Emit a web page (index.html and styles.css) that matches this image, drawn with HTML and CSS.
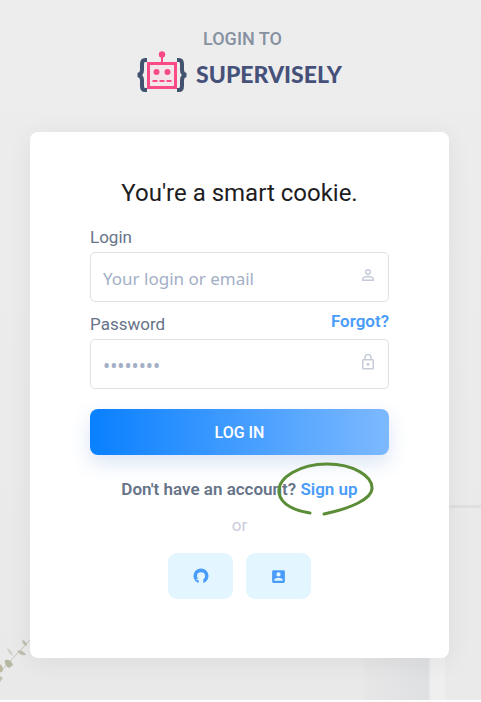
FILE: index.html
```html
<!DOCTYPE html>
<html lang="en">
<head>
<meta charset="utf-8">
<meta name="viewport" content="width=device-width, initial-scale=1">
<title>Login to Supervisely</title>
<link rel="stylesheet" href="styles.css">
</head>
<body>
<div class="page">
  <div class="wall" aria-hidden="true">
    <div class="shelf"></div>
    <div class="post"></div>
    <svg class="twig" width="36" height="50" viewBox="0 0 36 50">
      <path d="M-2 40L30 6" fill="none" stroke="#c3c3ba" stroke-width="1"/>
      <g fill="#c0bfb0">
        <path d="M22 6q5 1 5 6q-5-1-5-6z"/>
        <path d="M17 17q6-2 9 4q-6 1-9-4z"/>
        <path d="M7 14q5 2 6 8q-5-2-6-8z" fill="#d0d0c9"/>
        <path d="M5 26q6-1 8 5l-4 3q-5-3-4-8z" fill="#b8b7a2"/>
        <path d="M-2 29q5 2 5 8l-5 3z" fill="#bdb99f"/>
        <path d="M0 42l3 2-3 4z"/>
      </g>
    </svg>
  </div>

  <header class="brand">
    <p class="brand-lead">LOGIN TO</p>
    <div class="brand-logo">
      <svg width="50" height="42" viewBox="0 0 50 42" aria-hidden="true">
        <g fill="none" stroke="#43536f" stroke-width="4">
          <path d="M10 9H8q-3 0-3 4v6q0 4-4 5q4 1 4 5v6q0 4 3 4h2"/>
          <path d="M40 9h2q3 0 3 4v6q0 4 4 5q-4 1-4 5v6q0 4-3 4h-2"/>
        </g>
        <rect x="11.500" y="12.500" width="27" height="24" fill="#f1e6ea" stroke="#fa4b86" stroke-width="3"/>
        <path d="M25 4v9" stroke="#fa4b86" stroke-width="2"/>
        <g fill="#fa4b86">
          <circle cx="25" cy="3.500" r="3.200"/>
          <circle cx="19.500" cy="21" r="3"/>
          <circle cx="30.500" cy="21" r="3"/>
        </g>
        <path d="M15.500 30h5m2 0h5m2 0h5" stroke="#fa4b86" stroke-width="2"/>
      </svg>
      <span class="brand-name">SUPERVISELY</span>
    </div>
  </header>

  <main class="card">
    <h1>You're a smart cookie.</h1>
    <form>
      <div class="label-row"><label for="login">Login</label></div>
      <div class="field">
        <input id="login" type="text" placeholder="Your login or email">
        <svg viewBox="0 0 24 24" aria-hidden="true"><path d="M12 5.900a2.100 2.100 0 1 1 0 4.200 2.100 2.100 0 0 1 0-4.200m0 9c2.970 0 6.100 1.460 6.100 2.100v1.100H5.900V17c0-.64 3.130-2.100 6.100-2.100M12 4a4 4 0 1 0 0 8 4 4 0 0 0 0-8zm0 9c-2.670 0-8 1.340-8 4v3h16v-3c0-2.660-5.330-4-8-4z"/></svg>
      </div>
      <div class="label-row"><label for="password">Password</label><a href="#">Forgot?</a></div>
      <div class="field">
        <input id="password" type="password" placeholder="••••••••">
        <svg viewBox="0 0 24 24" aria-hidden="true"><path d="M12 17a2 2 0 1 0 0-4 2 2 0 0 0 0 4zm6-9h-1V6A5 5 0 0 0 7 6v2H6a2 2 0 0 0-2 2v10c0 1.100.9 2 2 2h12a2 2 0 0 0 2-2V10a2 2 0 0 0-2-2zM8.900 6a3.100 3.100 0 0 1 6.200 0v2H8.900V6zM18 20H6V10h12v10z"/></svg>
      </div>
      <button class="submit" type="submit">LOG IN</button>
    </form>
    <p class="signup">Don't have an account? <a href="#">Sign up<svg class="ring" width="98" height="54" viewBox="0 0 98 54" aria-hidden="true"><path d="M33 51C19 49 4 43 2 31C0 15 24 2 50 2C76 2 96 14 95 27C94 37 75 46 47 52" fill="none" stroke="#5a8d36" stroke-width="3" stroke-linecap="round"/></svg></a></p>
    <p class="or">or</p>
    <div class="social">
      <button type="button" aria-label="Log in with GitHub"><svg width="16" height="16" viewBox="0 0 24 24"><path d="M8.500 22.500v-4c-2.500.3-3.500-1-4-2.200l2 .3 2 .2c-1.700-1-2.500-2.700-2.500-4.800 0-4 2.500-5.500 6-5.500s6 1.500 6 5.500c0 2.800-1.300 4.500-3 5.200l.5 1.300v4A11.200 11.200 0 1 0 8.500 22.500z"/></svg></button>
      <button type="button" aria-label="Log in with account"><svg width="17" height="17" viewBox="0 0 24 24"><path d="M3 5v14a2 2 0 0 0 2 2h14a2 2 0 0 0 2-2V5a2 2 0 0 0-2-2H5a2 2 0 0 0-2 2zm12 4a3 3 0 1 1-6 0 3 3 0 0 1 6 0zm-9 8c0-2 4-3.100 6-3.100s6 1.100 6 3.100v1H6v-1z"/></svg></button>
    </div>
  </main>
</div>
</body>
</html>
```
FILE: styles.css
```css
* { box-sizing: border-box; }

body {
  margin: 0;
  font-family: Roboto, "Liberation Sans", sans-serif;
  font-size: 17px;
  line-height: 20px;
  color: #667388;
}

h1, p { margin: 0; }
a { color: #4a9cfb; text-decoration: none; font-weight: 600; }

.page {
  position: relative;
  min-height: 100vh;
  padding: 29px 32px 42px 30px;
  border-bottom: 2px solid #fcfcfc;
  background: linear-gradient(#ededee, #ebebec 60%, #e9e9ea);
}

.wall { position: absolute; inset: 0; overflow: hidden; }
.shelf {
  position: absolute;
  right: 0;
  bottom: 0;
  width: 36px;
  height: 195px;
  border-top: 3px solid #e0e0e1;
  background: #eaeaeb;
}
.post {
  position: absolute;
  right: 36px;
  bottom: 0;
  width: 81px;
  height: 46px;
  background: linear-gradient(90deg, #e7e7e8, #dfe0e2 64px, #efeff0 67px);
}
.twig { position: absolute; left: 0; bottom: 16px; }

.brand {
  position: relative;
  display: flex;
  flex-direction: column;
  align-items: center;
}
.brand-lead { padding-left: 6px; font-size: 18px; font-weight: 500; color: #85919f; }
.brand-logo { display: flex; align-items: center; gap: 9px; margin-top: 2px; }
.brand-name {
  padding-top: 4px;
  font-family: Lato, sans-serif;
  font-size: 23px;
  font-weight: 900;
  line-height: 26px;
  color: #46517a;
}

.card {
  position: relative;
  margin-top: 39px;
  padding: 45px 60px 59px;
  border-radius: 8px;
  background: #fff;
  box-shadow: 0 4px 24px rgba(60, 60, 70, 0.08);
}
h1 {
  font-size: 24px;
  font-weight: 400;
  line-height: 32px;
  text-align: center;
  color: #1d1d1f;
}

form { margin-top: 15px; }
.label-row {
  display: flex;
  justify-content: space-between;
  height: 28px;
}
.label-row label { padding-top: 3px; }

.field { position: relative; margin-bottom: 9px; }
.field input {
  display: block;
  width: 100%;
  height: 50px;
  padding: 2px 40px 0 12px;
  border: 1px solid #dfe1e6;
  border-radius: 5px;
  background: #fff;
  font: 17px "Noto Sans", sans-serif;
  color: #5f6b80;
}
.field input[type="password"] { padding-top: 4px; font-size: 19px; }
.field input::placeholder { color: #a3afc6; opacity: 1; }
.field svg {
  position: absolute;
  top: 14px;
  right: 12px;
  width: 18px;
  height: 18px;
  fill: #c6cbd8;
}

.submit {
  display: block;
  width: 100%;
  height: 46px;
  margin-top: 20px;
  border: 0;
  border-radius: 8px;
  background: linear-gradient(90deg, #0980ff, #7db9ff);
  box-shadow: 0 8px 20px rgba(50, 110, 200, 0.18);
  font: 500 16px Roboto, sans-serif;
  color: #fff;
}

.signup { margin-top: 24px; font-weight: 600; text-align: center; white-space: nowrap; }
.signup a { position: relative; }
.ring { position: absolute; left: -23px; top: -17px; }
.or { margin-top: 16px; text-align: center; color: #cccbdd; }

.social { display: flex; justify-content: center; gap: 13px; margin-top: 18px; }
.social button {
  display: flex;
  align-items: center;
  justify-content: center;
  width: 65px;
  height: 46px;
  padding: 0;
  border: 0;
  border-radius: 9px;
  background: #e3f5ff;
}
.social svg { fill: #4a9cfb; }
```
